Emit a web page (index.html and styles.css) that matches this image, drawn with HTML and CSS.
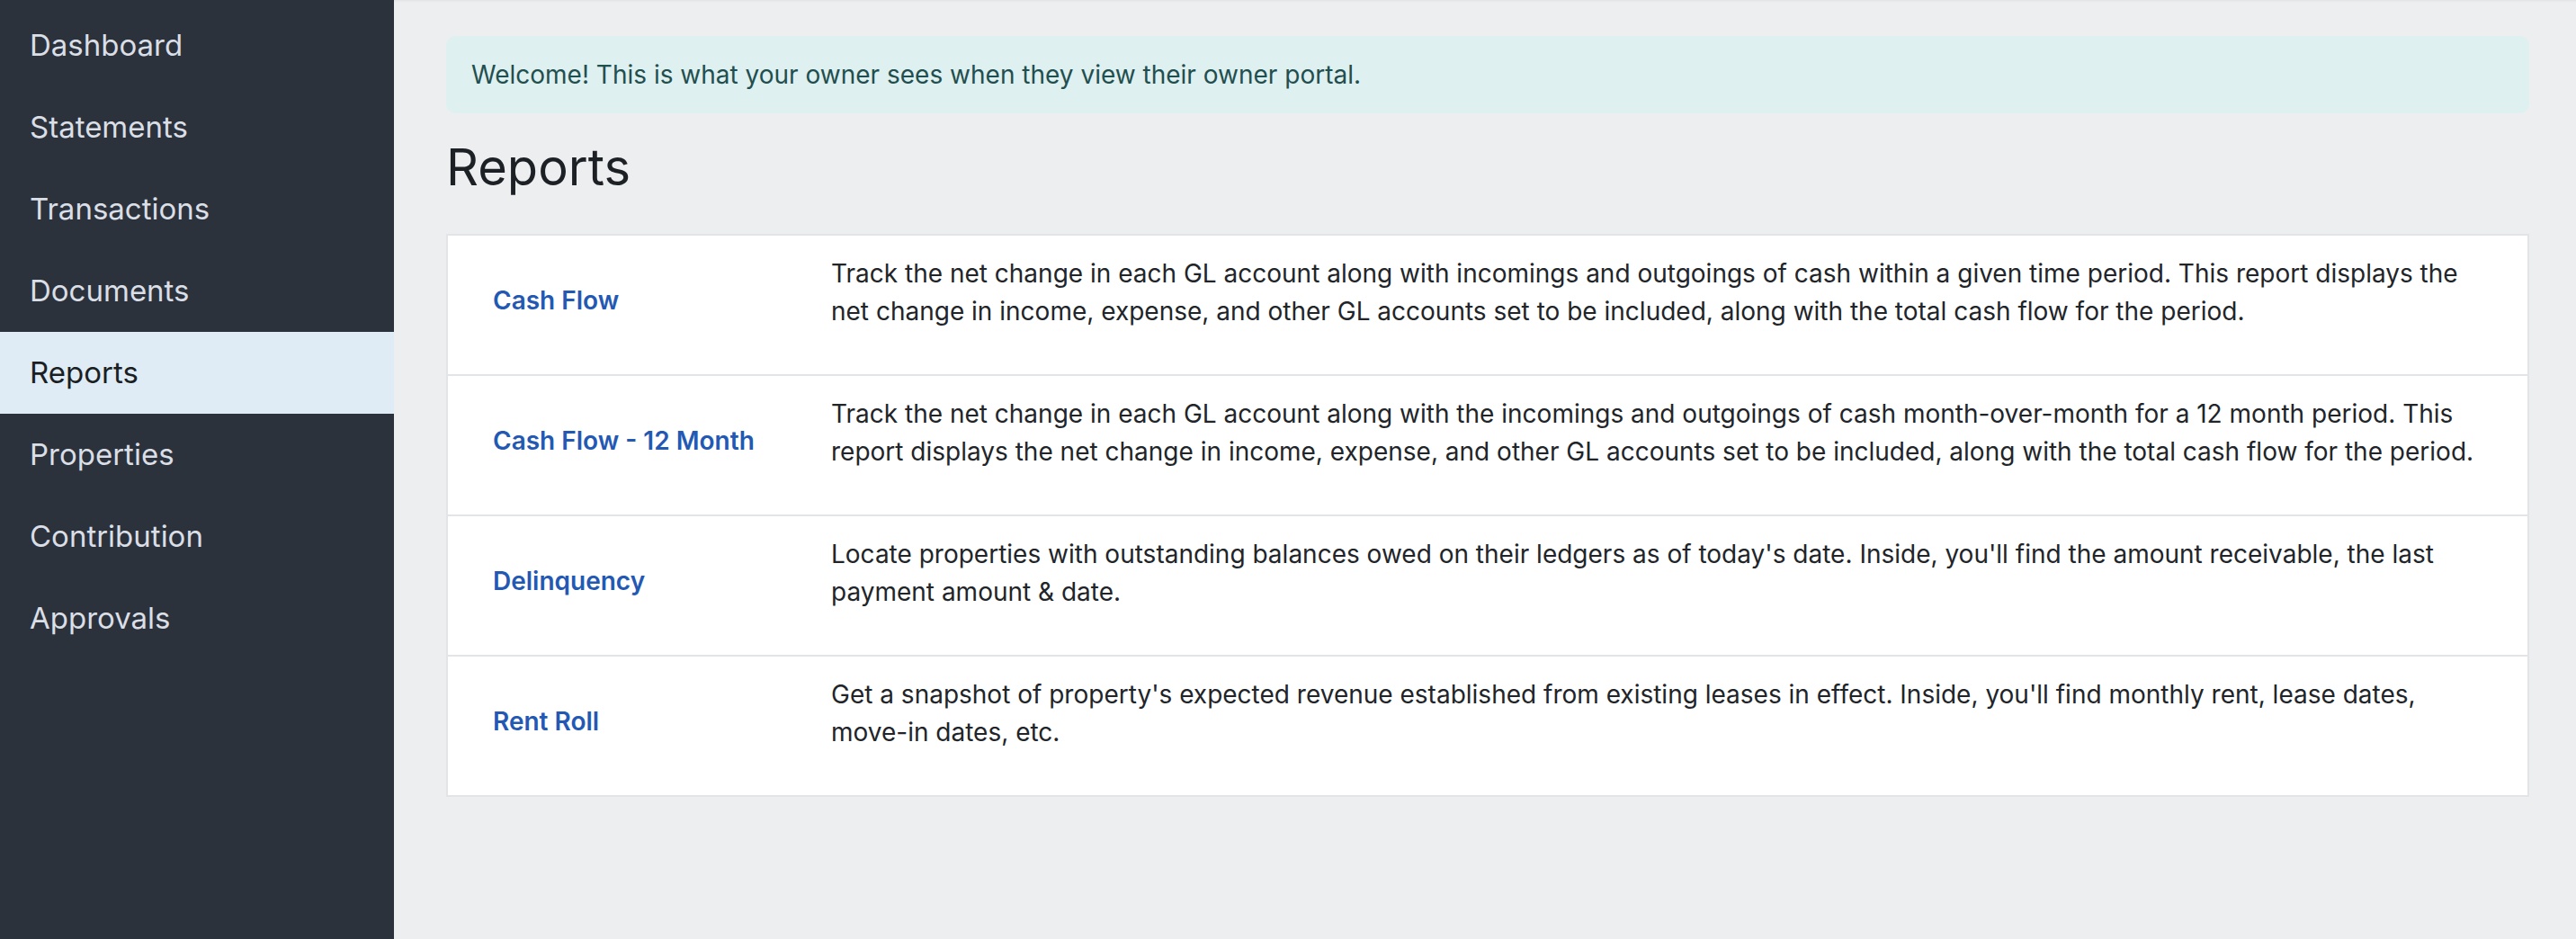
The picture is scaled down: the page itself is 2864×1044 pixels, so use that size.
FILE: index.html
```html
<!DOCTYPE html>
<html lang="en">
<head>
<meta charset="utf-8">
<title>Reports</title>
<link rel="stylesheet" href="styles.css">
</head>
<body>
<div class="app">
  <nav class="sidebar">
    <a class="nav-item" href="#">Dashboard</a>
    <a class="nav-item" href="#">Statements</a>
    <a class="nav-item" href="#">Transactions</a>
    <a class="nav-item" href="#">Documents</a>
    <a class="nav-item active" href="#">Reports</a>
    <a class="nav-item" href="#">Properties</a>
    <a class="nav-item" href="#">Contribution</a>
    <a class="nav-item" href="#">Approvals</a>
  </nav>
  <main class="main">
    <div class="alert">Welcome! This is what your owner sees when they view their owner portal.</div>
    <h1 class="page-title">Reports</h1>
    <div class="report-list">
      <div class="report-row">
        <div class="report-name"><a href="#">Cash Flow</a></div>
        <div class="report-desc"><p>Track the net change in each GL account along with incomings and outgoings of cash within a given time period. This report displays the net change in income, expense, and other GL accounts set to be included, along with the total cash flow for the period.</p></div>
      </div>
      <div class="report-row">
        <div class="report-name"><a href="#">Cash Flow - 12 Month</a></div>
        <div class="report-desc"><p>Track the net change in each GL account along with the incomings and outgoings of cash month-over-month for a 12 month period. This report displays the net change in income, expense, and other GL accounts set to be included, along with the total cash flow for the period.</p></div>
      </div>
      <div class="report-row">
        <div class="report-name"><a href="#">Delinquency</a></div>
        <div class="report-desc"><p>Locate properties with outstanding balances owed on their ledgers as of today's date. Inside, you'll find the amount receivable, the last payment amount &amp; date.</p></div>
      </div>
      <div class="report-row">
        <div class="report-name"><a href="#">Rent Roll</a></div>
        <div class="report-desc"><p>Get a snapshot of property's expected revenue established from existing leases in effect. Inside, you'll find monthly rent, lease dates, move-in dates, etc.</p></div>
      </div>
    </div>
  </main>
</div>
</body>
</html>
```

FILE: styles.css
```css
* { box-sizing: border-box; }

html, body {
  margin: 0;
  padding: 0;
  height: 100%;
}

body {
  font-family: Inter, "Liberation Sans", sans-serif;
  font-size: 28px;
  line-height: 42px;
  color: #212529;
  background: #edeef0;
}

.app {
  display: flex;
  min-height: 100vh;
}

.sidebar {
  width: 438px;
  flex: 0 0 438px;
  background: #2c323b;
  padding-top: 5px;
  display: flex;
  flex-direction: column;
}

.nav-item {
  display: block;
  height: 91px;
  padding: 0 33px;
  font-size: 33px;
  line-height: 91px;
  color: #dadee6;
  text-decoration: none;
}

.nav-item.active {
  background: #e0ecf5;
  color: #1b1f24;
}

.main {
  flex: 1;
  padding: 40px 52px 40px 58px;
  box-shadow: inset 0 3px 3px -2px rgba(0, 0, 0, 0.06);
}

.alert {
  background: #dff0f0;
  color: #1f4f4f;
  border-radius: 10px;
  padding: 22px 28px;
  margin-bottom: 27px;
}

.page-title {
  margin: 0 0 40px;
  font-size: 56px;
  line-height: 67px;
  font-weight: 400;
  color: #1d2125;
}

.report-list {
  background: #ffffff;
  border: 2px solid #e3e4e8;
}

.report-row {
  display: flex;
  align-items: center;
}

.report-row + .report-row {
  border-top: 2px solid #e3e4e8;
}

.report-name {
  flex: 0 0 426px;
  padding: 0 20px 11px 50px;
}

.report-name a {
  color: #2359b3;
  font-weight: 600;
  text-decoration: none;
}

.report-desc {
  flex: 1;
  padding: 21px 40px 21px 0;
}

.report-desc p {
  margin: 0 0 28px;
}
```
